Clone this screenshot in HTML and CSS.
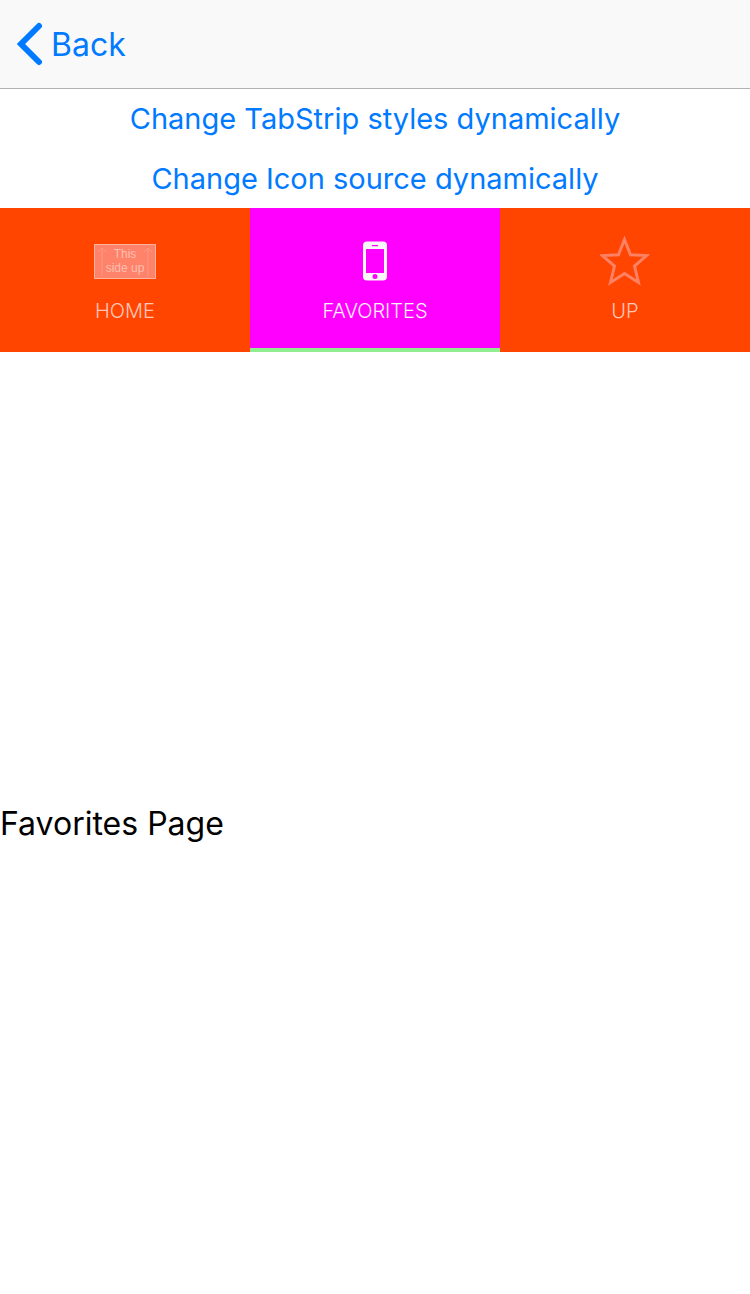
FILE: index.html
```html
<!DOCTYPE html>
<html lang="en">
<head>
<meta charset="utf-8">
<meta name="viewport" content="width=device-width, initial-scale=1">
<title>Favorites</title>
<link rel="stylesheet" href="styles.css">
</head>
<body>
<header class="navbar">
  <button class="back" type="button">
    <svg class="chevron" viewBox="0 0 26 44" aria-hidden="true"><path d="M22 4 4 22 22 40"/></svg>
    <span>Back</span>
  </button>
</header>
<div class="actions">
  <button class="action" type="button">Change TabStrip styles dynamically</button>
  <button class="action" type="button">Change Icon source dynamically</button>
</div>
<nav class="tabs" role="tablist">
  <button class="tab" type="button" role="tab" aria-selected="false">
    <span class="icon"><span class="sign">
      <svg class="arrow" viewBox="0 0 8 30" aria-hidden="true"><path d="M4 30V2M0 6l4-4 4 4"/></svg>
      <span>This<br>side up</span>
      <svg class="arrow" viewBox="0 0 8 30" aria-hidden="true"><path d="M4 30V2M0 6l4-4 4 4"/></svg>
    </span></span>
    <span class="label">HOME</span>
  </button>
  <button class="tab tab-active" type="button" role="tab" aria-selected="true">
    <span class="icon">
      <svg class="phone" viewBox="0 0 24 40" aria-hidden="true"><path fill-rule="evenodd" d="M4 .5h16a4 4 0 0 1 4 4v31a4 4 0 0 1-4 4H4a4 4 0 0 1-4-4v-31a4 4 0 0 1 4-4ZM3 8v24h18V8ZM9.500 4a.5.5 0 0 0 0 1.300h5a.5.5 0 0 0 0-1.300ZM12 33a2.500 2.500 0 1 0 0 5 2.500 2.500 0 0 0 0-5Z"/></svg>
    </span>
    <span class="label">FAVORITES</span>
  </button>
  <button class="tab" type="button" role="tab" aria-selected="false">
    <span class="icon">
      <svg class="star" viewBox="0 0 50 50" aria-hidden="true"><path d="M24.500 3.500 30.500 18.800 46.500 19.600 34.500 30 38.500 46.500 24.500 37.500 10.500 46.500 14.500 30 2.500 19.600 18.500 18.800Z"/></svg>
    </span>
    <span class="label">UP</span>
  </button>
</nav>
<main class="page"><p>Favorites Page</p></main>
</body>
</html>
```
FILE: styles.css
```css
* { box-sizing: border-box; }

body {
  margin: 0;
  min-height: 100vh;
  display: flex;
  flex-direction: column;
  background: #fff;
  color: #000;
  font-family: Inter, "Liberation Sans", sans-serif;
}

button {
  margin: 0;
  padding: 0;
  border: 0;
  background: none;
  color: inherit;
  font: inherit;
}

.navbar {
  display: flex;
  border-bottom: 1px solid #b2b2b2;
  background: #f9f9f9;
}

.back {
  display: flex;
  align-items: center;
  gap: 8px;
  height: 88px;
  padding-left: 17px;
  color: #007aff;
  font-size: 32px;
}

.chevron {
  width: 26px;
  height: 44px;
  fill: none;
  stroke: currentColor;
  stroke-width: 6;
  stroke-linecap: round;
}

.actions {
  display: flex;
  flex-direction: column;
}

.action {
  height: 60px;
  color: #007aff;
  font-size: 29px;
}

.action:first-child { height: 59px; }

.tabs {
  display: grid;
  grid-template-columns: repeat(3, 1fr);
}

.tab {
  display: flex;
  flex-direction: column;
  align-items: center;
  height: 144px;
  padding-top: 28px;
  border-bottom: 4px solid #ff4500;
  background: #ff4500;
  color: #ffc7b8;
}

.tab-active {
  border-bottom-color: #90ee90;
  background: #f0f;
  color: #fdf0fa;
}

.icon {
  display: flex;
  align-items: center;
  justify-content: center;
  height: 50px;
}

.label {
  margin-top: 13px;
  font-size: 20px;
  font-weight: 300;
  line-height: 24px;
}

.sign {
  display: flex;
  align-items: center;
  justify-content: center;
  width: 62px;
  height: 35px;
  border: 1px solid #ffb39e;
  background: #ff826b;
  color: #ffbfb0;
  font-family: "Liberation Sans", sans-serif;
  font-size: 12px;
  line-height: 14px;
  white-space: nowrap;
}

.arrow {
  flex: none;
  width: 8px;
  height: 30px;
  fill: none;
  stroke: #ff9984;
}

.phone {
  width: 24px;
  height: 40px;
  fill: #f8f8f8;
}

.star {
  width: 50px;
  height: 50px;
  fill: none;
  stroke: #ff8063;
  stroke-width: 3;
}

.page {
  flex: 1;
  display: flex;
  align-items: center;
}

.page p {
  margin: 0;
  font-size: 32px;
}
```
